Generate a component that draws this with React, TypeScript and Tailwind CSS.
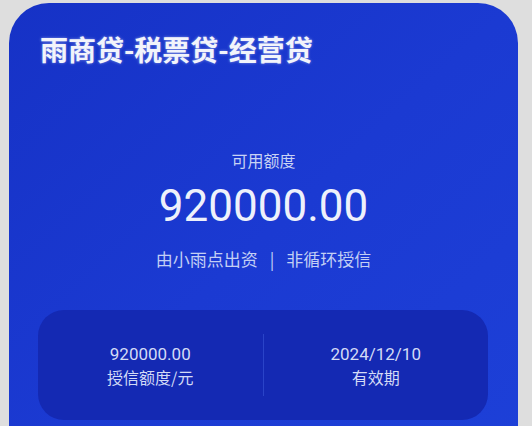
import React from "react";

export default function App() {
  return (
    <div
      className="w-[532px] h-[426px] overflow-hidden bg-[#dedede] pt-[3px] pl-[9px]"
      style={{ fontFamily: '"Noto Sans CJK SC", "Noto Sans", sans-serif' }}
    >
      <div className="w-[509px] h-[470px] rounded-t-[40px] bg-gradient-to-br from-[#1632c6] via-[#1b3ad2] to-[#1d40d8] flex flex-col">
        <div className="pt-[28px] pl-[31px] text-[28px] leading-[36px] font-bold text-[#f2f4fb] [text-shadow:0_0_3px_rgba(255,255,255,0.45)]">
          雨商贷-税票贷-经营贷
        </div>
        <div className="mt-[81px] text-center text-[16px] leading-[24px] text-[#c9d3f4]">
          可用额度
        </div>
        <div
          className="mt-[8px] text-center text-[44px] leading-[52px] text-[#eef1fb]"
          style={{ fontFamily: 'Roboto, "Noto Sans", sans-serif' }}
        >
          920000.00
        </div>
        <div className="mt-[15px] flex justify-center items-center text-[17px] leading-[24px] text-[#c3cff4]">
          <span>由小雨点出资</span>
          <span className="mx-[12px]">|</span>
          <span>非循环授信</span>
        </div>
        <div className="mt-[39px] ml-[29px] w-[450px] h-[110px] rounded-[26px] bg-[#1429b3] flex items-center">
          <div className="flex-1 flex flex-col items-center text-[#d3dbf6]">
            <div
              className="text-[17px] leading-[22px] mt-[2px]"
              style={{ fontFamily: 'Roboto, "Noto Sans", sans-serif' }}
            >
              920000.00
            </div>
            <div className="text-[16px] leading-[24px]">授信额度/元</div>
          </div>
          <div className="w-px h-[62px] bg-[#2a44c8]" />
          <div className="flex-1 flex flex-col items-center text-[#d3dbf6]">
            <div
              className="text-[17px] leading-[22px] mt-[2px]"
              style={{ fontFamily: 'Roboto, "Noto Sans", sans-serif' }}
            >
              2024/12/10
            </div>
            <div className="text-[16px] leading-[24px]">有效期</div>
          </div>
        </div>
      </div>
    </div>
  );
}
